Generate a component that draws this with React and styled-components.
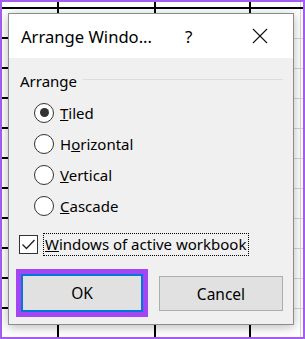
import React from 'react';
import styled, { createGlobalStyle } from 'styled-components';

const GlobalStyle = createGlobalStyle`
  body {
    margin: 0;
    font-family: "Noto Sans", "Open Sans", Arial, sans-serif;
  }
`;

const Sheet = styled.div`
  box-sizing: border-box;
  width: 305px;
  height: 339px;
  border: 2px solid #a55cf2;
  padding: 11px 0 0 6px;
  background-color: #fff;
  background-origin: border-box;
  background-repeat: no-repeat;
  background-image:
    linear-gradient(#000, #000),
    linear-gradient(#000, #000),
    linear-gradient(#000, #000),
    linear-gradient(#000, #000),
    repeating-linear-gradient(to bottom, #000 0 2px, transparent 2px 30px),
    repeating-linear-gradient(to bottom, #d4d4d4 0 1px, transparent 1px 30px),
    linear-gradient(#d4d4d4, #d4d4d4);
  background-size: 2px 100%, 2px 100%, 2px 100%, 100% 2px, 8px 100%, 12px 100%, 1px 100%;
  background-position: 57px 0, 154px 0, 249px 0, 0 7px, 0 7px, 293px 38px, 300px 0;
`;

const Dialog = styled.div`
  box-sizing: border-box;
  width: 286px;
  height: 312px;
  border: 1px solid #8c8c8c;
  background: #f0f0f0;
  box-shadow: 0 2px 10px rgba(0, 0, 0, 0.28);
  display: flex;
  flex-direction: column;
  color: #000;
`;

const TitleBar = styled.div`
  height: 44px;
  background: #fff;
  display: flex;
  align-items: center;
  padding-left: 12px;
`;

const Title = styled.span`
  font-size: 16.6px;
  width: 164px;
  white-space: nowrap;
`;

const HelpMark = styled.span`
  font-size: 17px;
  width: 67px;
`;

const CloseIcon = () => (
  <svg width="16" height="16" viewBox="0 0 16 16">
    <path d="M1 1 L15 15 M15 1 L1 15" stroke="#111" strokeWidth="1.1" fill="none" />
  </svg>
);

const Body = styled.div`
  display: flex;
  flex-direction: column;
  padding: 13px 10px 0 10px;
`;

const GroupHead = styled.div`
  display: flex;
  align-items: center;
  gap: 6px;
  font-size: 15px;
  line-height: 20px;
  padding-left: 1px;
  &::after {
    content: '';
    flex: 1;
    height: 1px;
    background: #dcdcdc;
    margin-top: -3px;
  }
`;

const RadioList = styled.div`
  display: flex;
  flex-direction: column;
  padding: 6px 0 0 15px;
`;

const RadioRow = styled.label`
  display: flex;
  align-items: center;
  gap: 6px;
  height: 31px;
  font-size: 15px;
`;

const RadioCircle = styled.span`
  box-sizing: border-box;
  width: 20px;
  height: 20px;
  border-radius: 50%;
  border: 1px solid #333;
  background: #fff;
  display: flex;
  align-items: center;
  justify-content: center;
  &::after {
    content: '';
    width: 9px;
    height: 9px;
    border-radius: 50%;
    background: ${(p) => (p.$checked ? '#333' : 'transparent')};
  }
`;

const CheckRow = styled.label`
  display: flex;
  align-items: center;
  gap: 5px;
  margin-top: 12px;
  height: 23px;
  font-size: 15px;
`;

const CheckBox = styled.span`
  box-sizing: border-box;
  width: 19px;
  height: 19px;
  border: 1px solid #333;
  background: #fff;
  display: flex;
  align-items: center;
  justify-content: center;
`;

const FocusText = styled.span`
  border: 1px dotted #000;
  padding: 0 2px 0 1px;
  line-height: 21px;
  white-space: nowrap;
`;

const ButtonRow = styled.div`
  display: flex;
  gap: 16px;
  margin-top: 18px;
  padding-left: 2px;
`;

const Button = styled.button`
  box-sizing: border-box;
  width: ${(p) => (p.$primary ? '122px' : '124px')};
  height: ${(p) => (p.$primary ? '38px' : '35px')};
  margin-top: ${(p) => (p.$primary ? '0' : '2px')};
  background: #e1e1e1;
  border: ${(p) => (p.$primary ? '2px solid #0078d7' : '1px solid #adadad')};
  outline: ${(p) => (p.$highlight ? '5px solid #a347f5' : 'none')};
  font-family: inherit;
  font-size: 15.5px;
  color: #000;
  padding: 0;
`;

const radios = [
  { key: 'T', rest: 'iled', checked: true },
  { pre: 'H', key: 'o', rest: 'rizontal' },
  { key: 'V', rest: 'ertical' },
  { key: 'C', rest: 'ascade' },
];

export default function App() {
  return (
    <>
      <GlobalStyle />
      <Sheet>
        <Dialog>
          <TitleBar>
            <Title>Arrange Windo...</Title>
            <HelpMark>?</HelpMark>
            <CloseIcon />
          </TitleBar>
          <Body>
            <GroupHead>Arrange</GroupHead>
            <RadioList>
              {radios.map((r) => (
                <RadioRow key={r.key}>
                  <RadioCircle $checked={r.checked} />
                  <span>
                    {r.pre}
                    <u>{r.key}</u>
                    {r.rest}
                  </span>
                </RadioRow>
              ))}
            </RadioList>
            <CheckRow>
              <CheckBox>
                <svg width="15" height="13" viewBox="0 0 15 13">
                  <path d="M1.5 6.5 L5.5 10.5 L13.5 2" stroke="#222" strokeWidth="1.3" fill="none" />
                </svg>
              </CheckBox>
              <FocusText>
                <u>W</u>indows of active workbook
              </FocusText>
            </CheckRow>
            <ButtonRow>
              <Button $primary $highlight>OK</Button>
              <Button>Cancel</Button>
            </ButtonRow>
          </Body>
        </Dialog>
      </Sheet>
    </>
  );
}
